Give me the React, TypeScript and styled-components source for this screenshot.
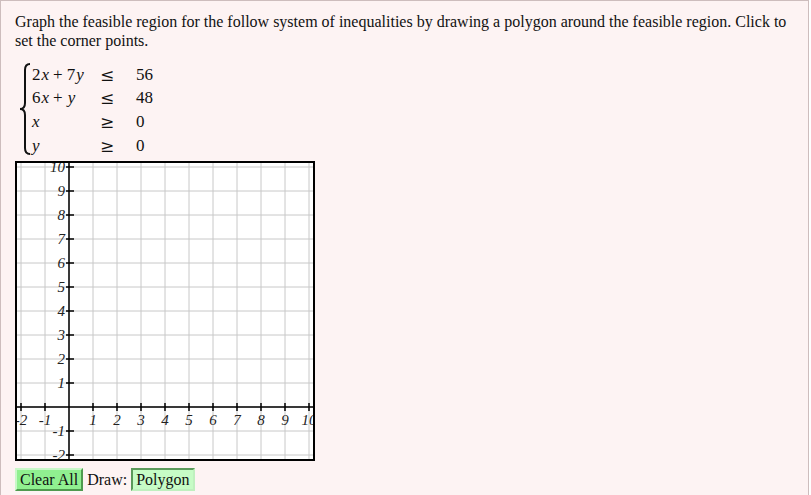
import React from "react";
import styled, { createGlobalStyle } from "styled-components";

const GlobalStyle = createGlobalStyle`
  html, body {
    margin: 0;
    padding: 0;
    background: #ffffff;
  }
`;

const Panel = styled.div`
  box-sizing: border-box;
  width: 809px;
  min-height: 500px;
  border: 1px solid #cdbdbd;
  background: #fdf3f3;
  padding: 11px 14px 0 14px;
  font-family: "Liberation Serif", "Times New Roman", serif;
  font-size: 16px;
  color: #111;
`;

const Prompt = styled.p`
  margin: 0;
  line-height: 19px;
`;

const SystemBlock = styled.div`
  display: flex;
  align-items: stretch;
  margin-top: 13px;
  margin-left: 3px;
  height: 96px;
`;

const Brace = styled.svg`
  width: 14px;
  height: 92px;
  flex: none;
`;

const Rows = styled.div`
  display: grid;
  grid-template-columns: 68px 36px auto;
  grid-auto-rows: 23.67px;
  align-items: center;
`;

const MathCell = styled.span<{ $italic?: boolean }>`
  font-family: "Liberation Serif", "Times New Roman", serif;
  font-size: 17px;
  white-space: nowrap;
  font-style: ${(p) => (p.$italic ? "italic" : "normal")};
`;

const Var = styled.i`
  font-style: italic;
  padding-left: 1px;
`;

const Op = styled.span`
  margin: 0 4px;
`;

const Rel = styled.span`
  font-family: "DejaVu Serif", serif;
  font-size: 17px;
`;

const GraphBox = styled.svg`
  display: block;
  margin-top: 2px;
  width: 300px;
  height: 300px;
  background: #ffffff;
`;

const Controls = styled.div`
  display: flex;
  align-items: center;
  gap: 4px;
  margin-top: 7px;
`;

const ToolButton = styled.button<{ $active?: boolean }>`
  font-family: "Liberation Serif", "Times New Roman", serif;
  font-size: 16px;
  color: #111;
  height: 23px;
  padding: 0 3px;
  margin: 0;
  cursor: pointer;
  background: ${(p) => (p.$active ? "#c6fcc6" : "#90f090")};
  border: 2px solid;
  border-color: ${(p) =>
    p.$active ? "#5a9a5a #bff0bf #bff0bf #5a9a5a" : "#c8f8c8 #4f9a4f #4f9a4f #c8f8c8"};
  line-height: 18px;
`;

const Label = styled.span`
  line-height: 22px;
`;

const SIZE = 300;
const MIN = -2.25;
const MAX = 10.25;
const UNIT = SIZE / (MAX - MIN);
const sx = (x: number) => (x - MIN) * UNIT;
const sy = (y: number) => (MAX - y) * UNIT;
const ticks = [-2, -1, 1, 2, 3, 4, 5, 6, 7, 8, 9, 10];
const gridVals = [-2, -1, 0, 1, 2, 3, 4, 5, 6, 7, 8, 9, 10];

function Graph() {
  const ox = sx(0);
  const oy = sy(0);
  return (
    <GraphBox viewBox={`0 0 ${SIZE} ${SIZE}`}>
      <g stroke="#c8c8c8" strokeWidth={1}>
        {gridVals.map((v) => (
          <line key={"v" + v} x1={sx(v)} y1={0} x2={sx(v)} y2={SIZE} />
        ))}
        {gridVals.map((v) => (
          <line key={"h" + v} x1={0} y1={sy(v)} x2={SIZE} y2={sy(v)} />
        ))}
      </g>
      <g stroke="#000" strokeWidth={1.5}>
        <line x1={0} y1={oy} x2={SIZE} y2={oy} />
        <line x1={ox} y1={0} x2={ox} y2={SIZE} />
        {ticks.map((t) => (
          <line key={"tx" + t} x1={sx(t)} y1={oy - 4} x2={sx(t)} y2={oy + 4} />
        ))}
        {ticks.map((t) => (
          <line key={"ty" + t} x1={ox - 3} y1={sy(t)} x2={ox + 5} y2={sy(t)} />
        ))}
      </g>
      <g
        fontFamily="'Liberation Serif', 'Times New Roman', serif"
        fontStyle="italic"
        fontSize={15}
        fill="#222"
      >
        {ticks.map((t) => (
          <text key={"lx" + t} x={sx(t)} y={oy + 18} textAnchor="middle">
            {t}
          </text>
        ))}
        {ticks.map((t) => (
          <text key={"ly" + t} x={ox - 4} y={sy(t) + 5} textAnchor="end">
            {t}
          </text>
        ))}
      </g>
      <rect x={1} y={1} width={SIZE - 2} height={SIZE - 2} fill="none" stroke="#000" strokeWidth={2} />
    </GraphBox>
  );
}

export default function App() {
  return (
    <>
      <GlobalStyle />
      <Panel>
        <Prompt>
          Graph the feasible region for the follow system of inequalities by drawing a polygon around the
          feasible region. Click to set the corner points.
        </Prompt>
        <SystemBlock>
          <Brace viewBox="0 0 14 92">
            <path
              d="M12 1 Q7 1 7 7 L7 40 Q7 46 2 46 Q7 46 7 52 L7 85 Q7 91 12 91"
              fill="none"
              stroke="#111"
              strokeWidth={2}
            />
          </Brace>
          <Rows>
            <MathCell>
              2<Var>x</Var>
              <Op>+</Op>7<Var>y</Var>
            </MathCell>
            <Rel>≤</Rel>
            <MathCell>56</MathCell>
            <MathCell>
              6<Var>x</Var>
              <Op>+</Op>
              <Var>y</Var>
            </MathCell>
            <Rel>≤</Rel>
            <MathCell>48</MathCell>
            <MathCell $italic>x</MathCell>
            <Rel>≥</Rel>
            <MathCell>0</MathCell>
            <MathCell $italic>y</MathCell>
            <Rel>≥</Rel>
            <MathCell>0</MathCell>
          </Rows>
        </SystemBlock>
        <Graph />
        <Controls>
          <ToolButton>Clear All</ToolButton>
          <Label>Draw:</Label>
          <ToolButton $active>Polygon</ToolButton>
        </Controls>
      </Panel>
    </>
  );
}
